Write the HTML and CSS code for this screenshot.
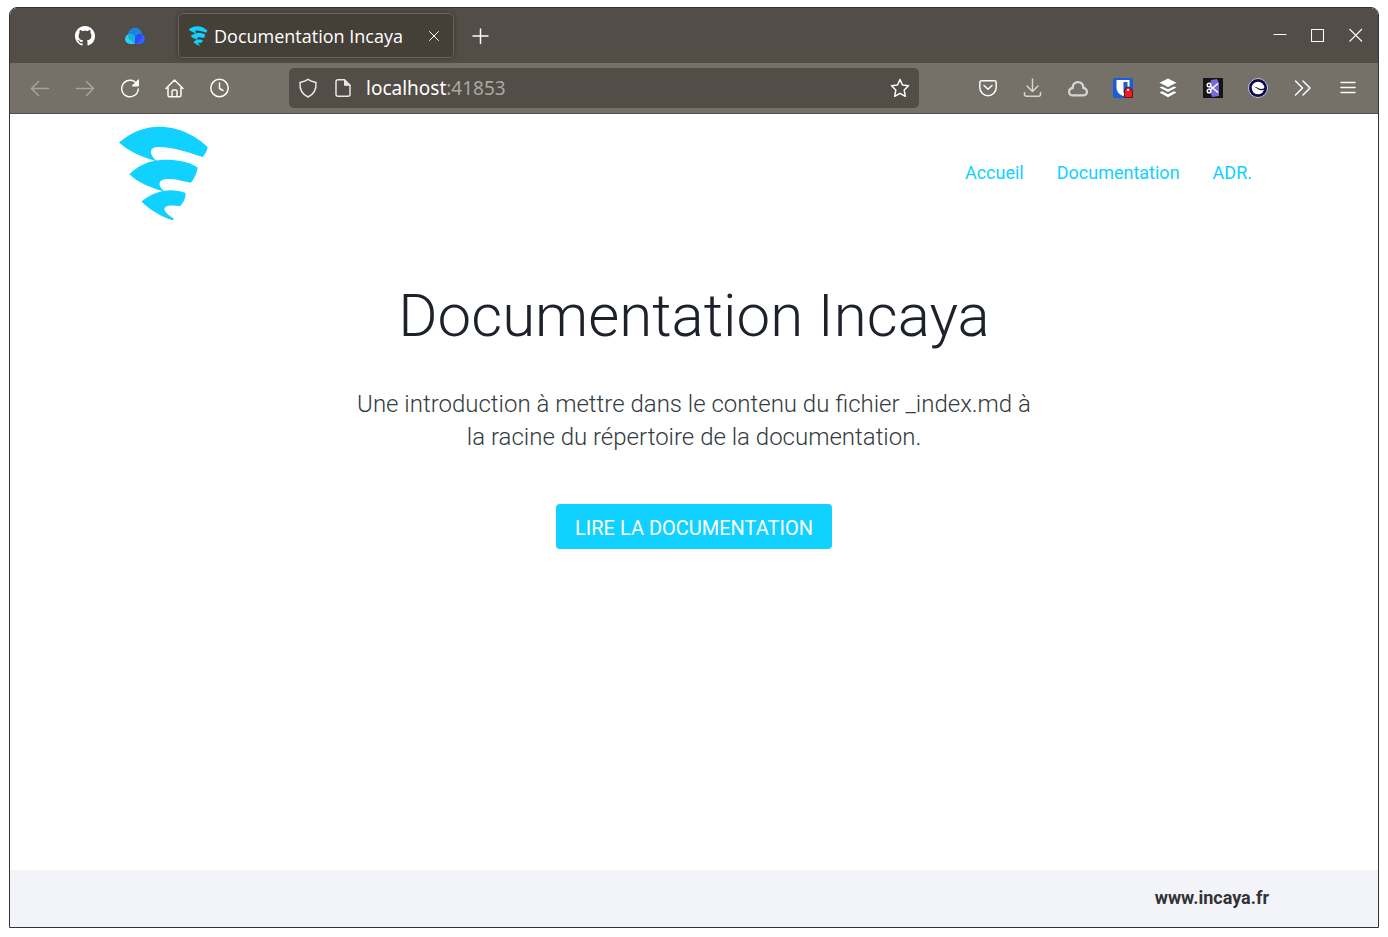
FILE: index.html
```html
<!DOCTYPE html>
<html lang="fr">
<head>
<meta charset="utf-8">
<title>Documentation Incaya</title>
<link rel="stylesheet" href="styles.css">
</head>
<body>
<svg class="sprite" aria-hidden="true">
  <symbol id="incaya" viewBox="57 34 266 284">
    <path d="M57 83C99 48 140 36 176 36C240 36 292 67 322 97C320 108 315 119 307 127C269 115 220 97 175 97C151 97 144 111 164 134L169 137C199 132 257 134 292 158C290 174 282 193 271 204C244 198 222 191 197 193C177 194 172 209 186 223L191 228C214 224 237 228 256 234C257 248 249 264 240 273C226 272 212 270 201 273C185 279 192 293 221 311L218 316C186 307 148 285 124 260C142 245 164 233 188 229C150 217 111 202 88 178C111 156 137 142 165 138C124 126 85 109 57 83Z"/>
  </symbol>
</svg>
<div class="window">
  <header class="tabs">
    <button class="pinned" aria-label="GitHub"><svg class="icon" viewBox="0 0 16 16" fill="#fff"><path d="M8 0C3.58 0 0 3.58 0 8c0 3.54 2.29 6.53 5.47 7.59.4.07.55-.17.55-.38 0-.19-.01-.82-.01-1.49-2.01.37-2.53-.49-2.69-.94-.09-.23-.48-.94-.82-1.13-.28-.15-.68-.52-.01-.53.63-.01 1.08.58 1.23.82.72 1.21 1.87.87 2.33.66.07-.52.28-.87.51-1.07-1.78-.2-3.64-.89-3.64-3.95 0-.87.31-1.59.82-2.15-.08-.2-.36-1.02.08-2.12 0 0 .67-.21 2.2.82.64-.18 1.32-.27 2-.27s1.36.09 2 .27c1.53-1.04 2.2-.82 2.2-.82.44 1.1.16 1.92.08 2.12.51.56.82 1.27.82 2.15 0 3.07-1.87 3.75-3.65 3.95.29.25.54.73.54 1.48 0 1.07-.01 1.93-.01 2.2 0 .21.15.46.55.38A8.01 8.01 0 0 0 16 8c0-4.42-3.58-8-8-8Z"/></svg></button>
    <button class="pinned" aria-label="Cloud"><svg class="icon" viewBox="0 0 20 20"><circle cx="10" cy="9" r="7.2" fill="#1b84e0"/><path d="M10 18H5A5 5 0 1 1 10 12.500Z" fill="#2bd3ea"/><path d="M10 18H15A5 5 0 1 0 10 12.500Z" fill="#2b66ff"/><path d="M3 8.400Q8 7 10 12V18Q8 18 7 15Q3 14 3 8.400Z" fill="#14b3dc"/><path d="M17 8.400Q12 7 10 12V18Q13 18 14 15Q17 13 17 8.400Z" fill="#3348f5"/></svg></button>
    <div class="tab">
      <svg class="icon brand"><use href="#incaya"/></svg>
      <span class="tab-title">Documentation Incaya</span>
      <button class="tab-close" aria-label="Fermer l’onglet"><svg viewBox="0 0 10 10"><path d="M.5.5 9.500 9.500M9.500.5.500 9.500"/></svg></button>
    </div>
    <button class="new-tab" aria-label="Nouvel onglet"><svg class="line" viewBox="0 0 20 20"><path d="M10.500 3V17.500M3 10H18"/></svg></button>
    <div class="controls">
      <button aria-label="Réduire"><svg viewBox="0 0 14 14"><path d="M.5 6.500H13.500"/></svg></button>
      <button aria-label="Agrandir"><svg viewBox="0 0 14 14"><path d="M.5 1.500H12.500V13.500H.5Z"/></svg></button>
      <button aria-label="Fermer"><svg viewBox="0 0 14 14"><path d="M.5 1 13 13.500M13 1 .5 13.500"/></svg></button>
    </div>
  </header>
  <div class="toolbar">
    <div class="tools">
      <button class="disabled" aria-label="Précédent"><svg class="line" viewBox="0 0 20 20"><path d="M18.500 10.500H1.500M8.500 3.500 1.500 10.500 8.500 17.500"/></svg></button>
      <button class="disabled" aria-label="Suivant"><svg class="line" viewBox="0 0 20 20"><path d="M1.500 10.500H18.500M11.500 3.500 18.500 10.500 11.500 17.500"/></svg></button>
      <button aria-label="Actualiser"><svg class="line" viewBox="0 0 20 20"><path d="M17 6A8.300 8.300 0 1 0 18.300 11"/><path class="solid" d="M18.500 2V8H12.500Z"/></svg></button>
      <button aria-label="Accueil du navigateur"><svg class="line" viewBox="0 0 20 20"><path d="M1 10.500 9.500 2 18 10.500M3 9.500V17.200Q3 18.700 4.500 18.700H14.500Q16 18.700 16 17.200V9.500M7 18.500V13.500Q7 12 8.500 12H10.500Q12 12 12 13.500V18.500"/></svg></button>
      <button aria-label="Historique"><svg class="line" viewBox="0 0 20 20"><circle cx="9.500" cy="10" r="8.700"/><path d="M9.500 5V10.500L13 12.500"/></svg></button>
    </div>
    <div class="address">
      <svg class="line" viewBox="0 0 20 20"><path d="M10 1.200C12 3 15.500 3.800 18 4.500C18.500 11.500 15.500 16.500 10 19C4.500 16.500 1.500 11.500 2 4.500C4.500 3.800 8 3 10 1.200Z"/></svg>
      <svg class="line" viewBox="0 0 20 20"><path d="M11.500 1.800H5Q3 1.800 3 3.800V16.200Q3 18.200 5 18.200H15Q17 18.200 17 16.200V7.300Z"/><path class="solid" d="M11.500 2V7.300H17Z"/></svg>
      <a class="url" href="#">localhost<span>:41853</span></a>
      <button class="star" aria-label="Marque-page"><svg class="line" viewBox="0 0 20 20"><path d="M10 1.500 12.500 7 18.500 7.700 14.200 12 15.300 18.300 10 15.300 4.700 18.300 5.800 12 1.500 7.700 7.500 7Z"/></svg></button>
    </div>
    <div class="tools">
      <button aria-label="Pocket"><svg class="line" viewBox="0 0 20 20"><path d="M3.500 2.800H16.500Q18.200 2.800 18.200 4.500V9.500A8.200 8.200 0 0 1 1.800 9.500V4.500Q1.800 2.800 3.500 2.800ZM6 7.500 10 11.200 14 7.500"/></svg></button>
      <button class="dim" aria-label="Téléchargements"><svg class="line" viewBox="0 0 20 20"><path d="M9.500 1V13.500M4 8 9.500 13.500 15 8M1.500 14.500V16.500Q1.500 18.200 3.500 18.200H15.500Q17.500 18.200 17.500 16.500V14.500"/></svg></button>
      <button class="dim" aria-label="Nuage"><svg class="line thick" viewBox="0 0 20 20"><path d="M4.800 17.400H15.200A3.700 3.700 0 0 0 15.200 10A5.250 5.250 0 1 0 4.800 10A3.700 3.700 0 0 0 4.800 17.400Z"/></svg></button>
      <button aria-label="Gestionnaire de mots de passe"><svg class="icon" viewBox="0 0 20 20"><rect width="20" height="20" rx="2" fill="#175ddc"/><path d="M3.500 2H16.500V10Q16 15 10 18Q3.500 15 3.500 10Z" fill="#fff"/><path d="M10.500 4H14.500V10Q14 13 10.500 15Z" fill="#175ddc"/><path d="M12.500 12V11Q12.500 9 15 9T18 11V12H19.500V19.500H11.500V12Z" fill="#ed1c24" stroke="#651515"/><rect x="14" y="11" width="2" height="2" fill="#fff"/></svg></button>
      <button aria-label="Buffer"><svg class="icon" viewBox="0 0 20 20" fill="#fff"><path d="M10 .5 18.500 4.800 10 9 1.500 4.800ZM1.500 9.500 4 8.400 10 11.300 16 8.400 18.500 9.500 10 14ZM1.500 14.500 4 13.300 10 16.200 16 13.300 18.500 14.500 10 19.200Z"/></svg></button>
      <button aria-label="Capture"><svg class="icon" viewBox="0 0 20 20"><path d="M0 0H20V20H0Z" fill="#151515"/><path d="M8 2 14 1 16 5V18L9 19 6 10Z" fill="#7869d6"/><g fill="none" stroke="#fff" stroke-width="1.500"><circle cx="6" cy="7" r="1.800"/><circle cx="6" cy="13" r="1.800"/><path d="M7.500 12 15 5.500M7.500 8 15 14.500"/></g></svg></button>
      <button aria-label="Extension"><svg class="icon" viewBox="0 0 20 20"><circle cx="10" cy="10" r="9.500" fill="#0b0751" stroke="#c8c6d5"/><circle cx="10" cy="10" r="6.300" fill="#fff"/><path d="M5.500 8.500Q9 9 11 10.500Q13 11.500 17 10V11.500Q13 13 10.500 11.500Q8 9.500 5.500 8.500Z" fill="#0b0751"/></svg></button>
      <button aria-label="Plus d’outils"><svg class="line" viewBox="0 0 20 20"><path d="M2.500 3 9.500 10 2.500 17M10 3 17 10 10 17"/></svg></button>
      <button aria-label="Menu"><svg class="line" viewBox="0 0 20 20"><path d="M3 4.500H17M3 9.500H17M3 14.500H17"/></svg></button>
    </div>
  </div>
  <div class="page">
    <div class="site-header">
      <a class="logo" href="#" aria-label="Incaya"><svg class="brand"><use href="#incaya"/></svg></a>
      <nav class="site-nav">
        <a href="#">Accueil</a>
        <a href="#">Documentation</a>
        <a href="#">ADR.</a>
      </nav>
    </div>
    <main class="hero">
      <h1>Documentation Incaya</h1>
      <p>Une introduction à mettre dans le contenu du fichier _index.md à la racine du répertoire de la documentation.</p>
      <a class="cta" href="#">LIRE LA DOCUMENTATION</a>
    </main>
    <footer class="site-footer"><a href="#">www.incaya.fr</a></footer>
  </div>
</div>
</body>
</html>
```
FILE: styles.css
```css
* { box-sizing: border-box; }
html, body { height: 100%; margin: 0; }
body {
  display: flex;
  padding: 7px 9px 9px;
  background: #fff;
  font-family: Roboto, sans-serif;
}
a { color: inherit; text-decoration: none; }
button {
  display: flex;
  align-items: center;
  justify-content: center;
  padding: 0;
  border: 0;
  background: none;
  color: #fbfbfa;
}
svg { display: block; flex: none; }
.sprite { display: none; }
.brand { fill: #10d1ff; }
.icon, .line { width: 20px; height: 20px; }
.line, .tab-close svg, .controls svg {
  fill: none;
  stroke: currentColor;
  stroke-width: 1.5;
  stroke-linecap: round;
  stroke-linejoin: round;
}
.thick { stroke-width: 2.3; }
.line .solid { fill: currentColor; stroke-width: 1; }

.window {
  display: flex;
  flex: 1;
  flex-direction: column;
  overflow: hidden;
  border: 1px solid #333;
  border-radius: 8px 8px 0 0;
}
.tabs {
  display: flex;
  align-items: center;
  height: 55px;
  padding: 0 3px 0 50px;
  background: #524d46;
  font-family: "Open Sans", "Noto Sans", sans-serif;
}
.pinned { width: 50px; height: 45px; }
.tab {
  display: flex;
  align-items: center;
  width: 276px;
  height: 45px;
  margin-left: 18px;
  padding: 0 8px 0 9px;
  border: 1px solid #69645d;
  border-radius: 5px;
  background: #444038;
  box-shadow: 0 0 4px #3b3731;
  color: #fff;
}
.tab-title { flex: 1; margin-left: 6px; font-size: 18px; white-space: nowrap; }
.tab-close { width: 22px; height: 22px; }
.tab-close svg { width: 10px; height: 10px; stroke-width: 1; }
.new-tab { width: 40px; height: 40px; margin-left: 6px; }
.controls { display: flex; margin-left: auto; }
.controls button { width: 38px; height: 40px; }
.controls svg { width: 14px; height: 14px; stroke-width: 1.1; stroke-linecap: butt; stroke-linejoin: miter; }
.controls button { padding-bottom: 2px; }

.toolbar {
  display: flex;
  align-items: center;
  gap: 49px;
  height: 51px;
  padding: 0 10px;
  border-bottom: 1px solid #524d46;
  background: #757068;
}
.tools { display: flex; gap: 5px; }
.tools button { width: 40px; height: 40px; }
.tools .disabled { color: #a6a39d; }
.tools .dim { color: #d6d4d2; }
.address {
  display: flex;
  flex: 1;
  align-items: center;
  gap: 15px;
  height: 40px;
  padding: 0 9px;
  border-radius: 5px;
  background: #524d46;
  color: #e8e7e5;
  font: 19px "Noto Sans", sans-serif;
}
.url { flex: 1; margin-left: -2px; color: #fff; }
.url span { color: #aaa7a3; }

.page { display: flex; flex: 1; flex-direction: column; background: #fff; }
.site-header {
  display: flex;
  align-items: center;
  justify-content: space-between;
  padding: 12px 126px 10px 109px;
}
.logo svg { width: 89px; height: 95px; }
.site-nav { display: flex; gap: 33px; padding-bottom: 2px; color: #10d1ff; font-size: 18px; line-height: 24px; }
.hero {
  display: flex;
  flex: 1;
  flex-direction: column;
  align-items: center;
  padding-top: 48px;
  text-align: center;
}
.hero h1 { margin: 0; color: #1d2129; font-size: 60px; font-weight: 300; line-height: 74px; }
.hero p {
  max-width: 690px;
  margin: 35px 0 50px;
  color: #343a40;
  font-size: 24px;
  font-weight: 300;
  line-height: 33px;
}
.cta {
  padding: 10px 19px 7px;
  border-radius: 4px;
  background: #10d1ff;
  color: #fff;
  font-size: 20px;
  line-height: 28px;
}
.site-footer {
  display: flex;
  align-items: center;
  justify-content: flex-end;
  height: 57px;
  padding: 0 109px 2px;
  background: #f3f4fa;
  color: #333;
  font-size: 18px;
  font-weight: 700;
}
```
